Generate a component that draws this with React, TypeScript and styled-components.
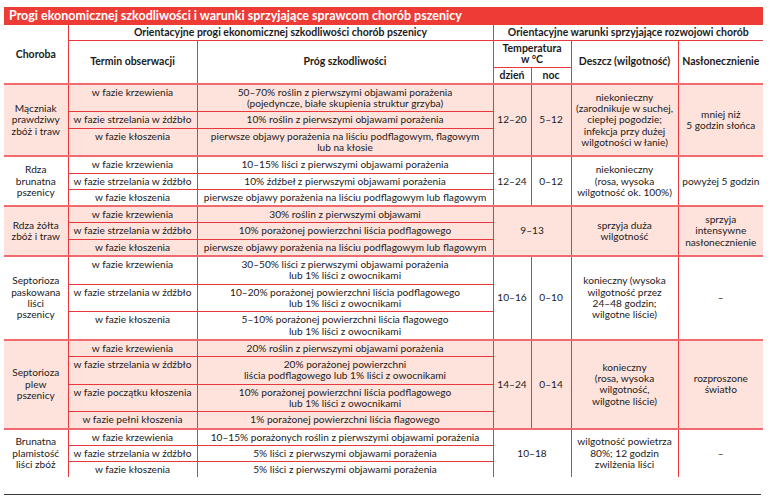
import React from 'react';
import styled, { createGlobalStyle } from 'styled-components';

const RED = '#e8383d';
const SEP = '#f06a6e';
const PINK = '#fde3db';

const Global = createGlobalStyle`
  html, body { margin: 0; padding: 0; background: #ffffff; }
  body { font-family: Lato, "Noto Sans", sans-serif; color: #1d1a1b; }
`;

const Page = styled.div`
  padding: 7px 0 0 4px;
  width: 759px;
`;

const Title = styled.div`
  background: #ee3b36;
  color: #ffffff;
  font-weight: 700;
  font-size: 12.5px;
  height: 18px;
  line-height: 18px;
  padding-left: 5px;
  white-space: nowrap;
`;

const Table = styled.table`
  width: 759px;
  border-collapse: collapse;
  table-layout: fixed;
  font-size: 10.15px;
  line-height: 11.4px;
`;

const Th = styled.th<{ $noLeft?: boolean; $noRight?: boolean }>`
  font-weight: 700;
  font-size: 10.5px;
  border: 1px solid ${RED};
  border-top: none;
  ${(p) => (p.$noLeft ? 'border-left: none;' : '')}
  ${(p) => (p.$noRight ? 'border-right: none;' : '')}
  padding: 2px 2px 1.4px;
  text-align: center;
  vertical-align: middle;
  white-space: nowrap;
  height: 11.4px;
`;

const Group = styled.tbody<{ $pink?: boolean; $last?: boolean }>`
  background: ${(p) => (p.$pink ? PINK : '#ffffff')};
  border-top: 2px solid ${SEP};
  ${(p) =>
    p.$last
      ? `& tr:last-child td, & td[rowspan] { border-bottom: none; }`
      : ''}
`;

const Td = styled.td<{ $noLeft?: boolean; $noRight?: boolean; $top?: boolean }>`
  border: 1px solid ${RED};
  ${(p) => (p.$noLeft ? 'border-left: none;' : '')}
  ${(p) => (p.$noRight ? 'border-right: none;' : '')}
  padding: 2px 2px 1.85px;
  text-align: center;
  vertical-align: ${(p) => (p.$top ? 'top' : 'middle')};
  white-space: nowrap;
`;

const Rule = styled.div`
  margin-top: 17px;
  width: 757px;
  height: 1px;
  background: #3a3a3a;
`;

type Stage = { term: string; thr: React.ReactNode };
type Disease = {
  name: React.ReactNode;
  pink: boolean;
  day: string;
  night?: string;
  rain: React.ReactNode;
  sun: React.ReactNode;
  stages: Stage[];
};

const K = 'w fazie krzewienia';
const S = 'w fazie strzelania w źdźbło';
const L = 'w fazie kłoszenia';

const data: Disease[] = [
  {
    name: <>Mączniak<br />prawdziwy<br />zbóż i traw</>,
    pink: true,
    day: '12–20',
    night: '5–12',
    rain: <>niekonieczny<br />(zarodnikuje w suchej,<br />ciepłej pogodzie;<br />infekcja przy dużej<br />wilgotności w łanie)</>,
    sun: <>mniej niż<br />5 godzin słońca</>,
    stages: [
      { term: K, thr: <>50–70% roślin z pierwszymi objawami porażenia<br />(pojedyncze, białe skupienia struktur grzyba)</> },
      { term: S, thr: '10% roślin z pierwszymi objawami porażenia' },
      { term: L, thr: <>pierwsze objawy porażenia na liściu podflagowym, flagowym<br />lub na kłosie</> },
    ],
  },
  {
    name: <>Rdza<br />brunatna<br />pszenicy</>,
    pink: false,
    day: '12–24',
    night: '0–12',
    rain: <>niekonieczny<br />(rosa, wysoka<br />wilgotność ok. 100%)</>,
    sun: 'powyżej 5 godzin',
    stages: [
      { term: K, thr: '10–15% liści z pierwszymi objawami porażenia' },
      { term: S, thr: '10% źdźbeł z pierwszymi objawami porażenia' },
      { term: L, thr: 'pierwsze objawy porażenia na liściu podflagowym lub flagowym' },
    ],
  },
  {
    name: <>Rdza żółta<br />zbóż i traw</>,
    pink: true,
    day: '9–13',
    rain: <>sprzyja duża<br />wilgotność</>,
    sun: <>sprzyja<br />intensywne<br />nasłonecznienie</>,
    stages: [
      { term: K, thr: '30% roślin z pierwszymi objawami' },
      { term: S, thr: '10% porażonej powierzchni liścia podflagowego' },
      { term: L, thr: 'pierwsze objawy porażenia na liściu podflagowym lub flagowym' },
    ],
  },
  {
    name: <>Septorioza<br />paskowana<br />liści<br />pszenicy</>,
    pink: false,
    day: '10–16',
    night: '0–10',
    rain: <>konieczny (wysoka<br />wilgotność przez<br />24–48 godzin;<br />wilgotne liście)</>,
    sun: '–',
    stages: [
      { term: K, thr: <>30–50% liści z pierwszymi objawami porażenia<br />lub 1% liści z owocnikami</> },
      { term: S, thr: <>10–20% porażonej powierzchni liścia podflagowego<br />lub 1% liści z owocnikami</> },
      { term: L, thr: <>5–10% porażonej powierzchni liścia flagowego<br />lub 1% liści z owocnikami</> },
    ],
  },
  {
    name: <>Septorioza<br />plew<br />pszenicy</>,
    pink: true,
    day: '14–24',
    night: '0–14',
    rain: <>konieczny<br />(rosa, wysoka<br />wilgotność,<br />wilgotne liście)</>,
    sun: <>rozproszone<br />światło</>,
    stages: [
      { term: K, thr: '20% roślin z pierwszymi objawami porażenia' },
      { term: S, thr: <>20% porażonej powierzchni<br />liścia podflagowego lub 1% liści z owocnikami</> },
      { term: 'w fazie początku kłoszenia', thr: <>10% porażonej powierzchni liścia podflagowego<br />lub 1% liści z owocnikami</> },
      { term: 'w fazie pełni kłoszenia', thr: '1% porażonej powierzchni liścia flagowego' },
    ],
  },
  {
    name: <>Brunatna<br />plamistość<br />liści zbóż</>,
    pink: false,
    day: '10–18',
    rain: <>wilgotność powietrza<br />80%; 12 godzin<br />zwilżenia liści</>,
    sun: '–',
    stages: [
      { term: K, thr: '10–15% porażonych roślin z pierwszymi objawami porażenia' },
      { term: S, thr: '5% liści z pierwszymi objawami porażenia' },
      { term: L, thr: '5% liści z pierwszymi objawami porażenia' },
    ],
  },
];

export default function App() {
  return (
    <Page>
      <Global />
      <Title>Progi ekonomicznej szkodliwości i warunki sprzyjające sprawcom chorób pszenicy</Title>
      <Table>
        <colgroup>
          <col style={{ width: 64 }} />
          <col style={{ width: 129 }} />
          <col style={{ width: 296 }} />
          <col style={{ width: 38 }} />
          <col style={{ width: 40 }} />
          <col style={{ width: 107 }} />
          <col style={{ width: 85 }} />
        </colgroup>
        <thead>
          <tr>
            <Th rowSpan={3} $noLeft>Choroba</Th>
            <Th colSpan={2}>Orientacyjne progi ekonomicznej szkodliwości chorób pszenicy</Th>
            <Th colSpan={4} $noRight>Orientacyjne warunki sprzyjające rozwojowi chorób</Th>
          </tr>
          <tr>
            <Th rowSpan={2}>Termin obserwacji</Th>
            <Th rowSpan={2}>Próg szkodliwości</Th>
            <Th colSpan={2}>Temperatura<br />w °C</Th>
            <Th rowSpan={2}>Deszcz (wilgotność)</Th>
            <Th rowSpan={2} $noRight>Nasłonecznienie</Th>
          </tr>
          <tr>
            <Th>dzień</Th>
            <Th>noc</Th>
          </tr>
        </thead>
        {data.map((d, gi) => {
          const n = d.stages.length;
          return (
            <Group key={gi} $pink={d.pink} $last={gi === data.length - 1}>
              {d.stages.map((s, i) => (
                <tr key={i}>
                  {i === 0 && <Td rowSpan={n} $noLeft>{d.name}</Td>}
                  <Td $top>{s.term}</Td>
                  <Td>{s.thr}</Td>
                  {i === 0 && (
                    <>
                      {d.night ? (
                        <>
                          <Td rowSpan={n}>{d.day}</Td>
                          <Td rowSpan={n}>{d.night}</Td>
                        </>
                      ) : (
                        <Td rowSpan={n} colSpan={2}>{d.day}</Td>
                      )}
                      <Td rowSpan={n}>{d.rain}</Td>
                      <Td rowSpan={n} $noRight>{d.sun}</Td>
                    </>
                  )}
                </tr>
              ))}
            </Group>
          );
        })}
      </Table>
      <Rule />
    </Page>
  );
}
